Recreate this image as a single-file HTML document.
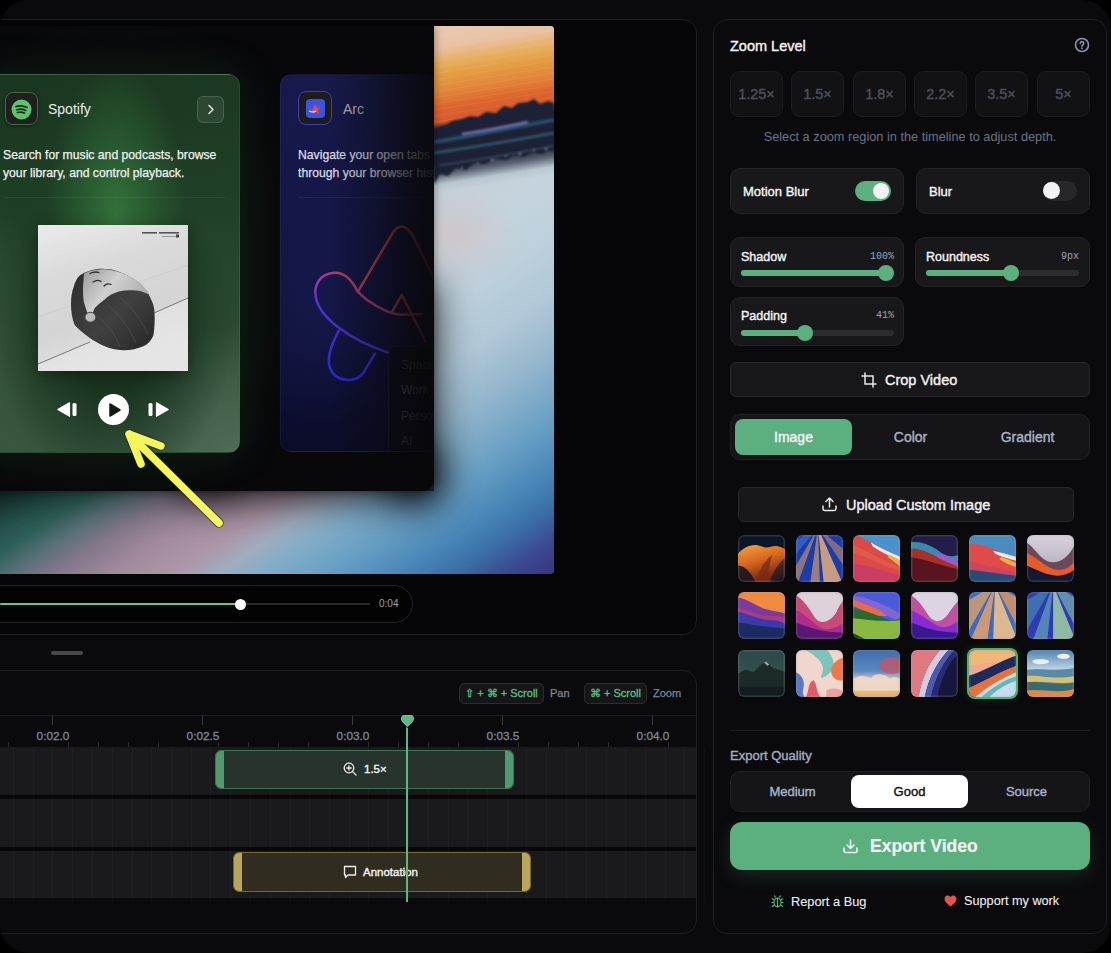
<!DOCTYPE html>
<html><head><meta charset="utf-8">
<style>
*{box-sizing:border-box;margin:0;padding:0}
html,body{width:1111px;height:953px;overflow:hidden;background:#000;font-family:"Liberation Sans",sans-serif}
.a{position:absolute}
#frame{position:absolute;left:0;top:0;width:1111px;height:953px;border-radius:28px;background:#0a0a0c;overflow:hidden}
.panel{position:absolute;border:1px solid #1e1e21;border-radius:14px}
.card{position:absolute;background:#18181a;border:1px solid #232326;border-radius:10px}
.lbl{position:absolute;color:#f2f2f4;font-size:13px;font-weight:normal;-webkit-text-stroke-width:0.4px;white-space:nowrap}
.zb{position:absolute;top:71px;width:53px;height:46px;border-radius:9px;background:#121214;border:1px solid #1c1c1f;color:#4d5058;font-size:14.5px;-webkit-text-stroke-width:.4px;text-align:center;line-height:44px}
.val{position:absolute;font-family:"Liberation Mono",monospace;font-size:10px;color:#9aa3b5;text-align:right}
.trk{position:absolute;height:6px;border-radius:3px;background:#2c2c2f}
.fill{position:absolute;left:0;top:0;height:6px;border-radius:3px;background:#5caf7f}
.knob{position:absolute;width:16px;height:16px;border-radius:50%;background:#5caf7f}
.th{position:absolute;width:47px;height:47px;border-radius:6px;overflow:hidden}
</style></head><body>
<div id="frame">
  <!-- video panel -->
  <div class="panel" id="vp" style="left:-20px;top:19px;width:717px;height:616px;background:#050507"></div>
  <!-- timeline panel -->
  <div class="panel" id="tp" style="left:-20px;top:670px;width:717px;height:264px;background:#0a0a0c"></div>
  <!-- right panel -->
  <div class="panel" id="rp" style="left:713px;top:19px;width:394px;height:915px;background:#0a0a0c"></div>

  <!-- RIGHT PANEL CONTENT -->
  <div class="lbl" style="left:730px;top:38px;font-size:14.5px">Zoom Level</div>
  <svg class="a" style="left:1074px;top:37px" width="16" height="16" viewBox="0 0 16 16"><circle cx="8" cy="8" r="6.5" fill="none" stroke="#8b95a8" stroke-width="1.6"/><path d="M6.2 6.4a1.8 1.8 0 1 1 2.6 1.6c-.6.3-.8.6-.8 1.2" fill="none" stroke="#8b95a8" stroke-width="1.6" stroke-linecap="round"/><circle cx="8" cy="11.3" r=".95" fill="#8b95a8"/></svg>
  <div class="zb" style="left:730px">1.25×</div>
  <div class="zb" style="left:791px">1.5×</div>
  <div class="zb" style="left:853px">1.8×</div>
  <div class="zb" style="left:914px">2.2×</div>
  <div class="zb" style="left:975px">3.5×</div>
  <div class="zb" style="left:1037px">5×</div>
  <div class="a" style="left:730px;width:360px;top:129px;text-align:center;color:#6b7385;font-size:12.75px">Select a zoom region in the timeline to adjust depth.</div>

  <div class="card" style="left:730px;top:168px;width:174px;height:46px"></div>
  <div class="lbl" style="left:743px;top:184px">Motion Blur</div>
  <div class="a" style="left:855px;top:181px;width:36px;height:20px;border-radius:10px;background:#5caf7f"></div>
  <div class="a" style="left:873px;top:183px;width:16px;height:16px;border-radius:50%;background:#f2f2f5"></div>

  <div class="card" style="left:916px;top:168px;width:174px;height:46px"></div>
  <div class="lbl" style="left:929px;top:184px">Blur</div>
  <div class="a" style="left:1043px;top:181px;width:34px;height:20px;border-radius:10px;background:#27272b"></div>
  <div class="a" style="left:1043px;top:182px;width:17px;height:17px;border-radius:50%;background:#f2f2f5"></div>

  <div class="card" style="left:730px;top:237px;width:174px;height:50px"></div>
  <div class="lbl" style="left:741px;top:250px;font-size:12.5px">Shadow</div>
  <div class="val" style="left:840px;width:54px;top:251px">100%</div>
  <div class="trk" style="left:741px;top:270px;width:153px"><div class="fill" style="width:146px"></div></div>
  <div class="knob" style="left:878px;top:265px"></div>

  <div class="card" style="left:915px;top:237px;width:175px;height:50px"></div>
  <div class="lbl" style="left:926px;top:250px;font-size:12.5px">Roundness</div>
  <div class="val" style="left:1025px;width:54px;top:251px">9px</div>
  <div class="trk" style="left:926px;top:270px;width:153px"><div class="fill" style="width:85px"></div></div>
  <div class="knob" style="left:1003px;top:265px"></div>

  <div class="card" style="left:730px;top:297px;width:174px;height:49px"></div>
  <div class="lbl" style="left:741px;top:309px;font-size:12.5px">Padding</div>
  <div class="val" style="left:840px;width:54px;top:310px">41%</div>
  <div class="trk" style="left:741px;top:330px;width:153px"><div class="fill" style="width:64px"></div></div>
  <div class="knob" style="left:797px;top:325px"></div>

  <div class="card" style="left:730px;top:362px;width:360px;height:35px;border-radius:6px;border-color:#28282b"></div>
  <svg class="a" style="left:861px;top:372px" width="16" height="16" viewBox="0 0 16 16" fill="none" stroke="#e8e8ea" stroke-width="1.5" stroke-linecap="round"><path d="M4 1v11h11"/><path d="M1 4h11v11"/></svg>
  <div class="lbl" style="left:885px;top:372px;font-size:14.5px">Crop Video</div>

  <div class="card" style="left:730px;top:414px;width:360px;height:46px;background:#151517;border-color:#202023"></div>
  <div class="a" style="left:735px;top:419px;width:117px;height:36px;border-radius:8px;background:#5caf7f"></div>
  <div class="lbl" style="left:735px;width:117px;text-align:center;top:429px;font-size:14px">Image</div>
  <div class="lbl" style="left:852px;width:117px;text-align:center;top:429px;font-size:14px;color:#a8b2c8">Color</div>
  <div class="lbl" style="left:969px;width:117px;text-align:center;top:429px;font-size:14px;color:#a8b2c8">Gradient</div>

  <div class="card" style="left:738px;top:487px;width:336px;height:35px;border-radius:6px;border-color:#28282b"></div>
  <svg class="a" style="left:821px;top:496px" width="17" height="17" viewBox="0 0 17 17" fill="none" stroke="#e8e8ea" stroke-width="1.5" stroke-linecap="round" stroke-linejoin="round"><path d="M8.5 11V2M5 5.5l3.5-3.5 3.5 3.5M2 10v2.8a1.7 1.7 0 0 0 1.7 1.7h9.6a1.7 1.7 0 0 0 1.7-1.7V10"/></svg>
  <div class="lbl" style="left:846px;top:497px;font-size:14.5px">Upload Custom Image</div>

  <div class="th" style="left:738px;top:534.5px;"><svg width="47" height="47" viewBox="0 0 47 47" style="display:block;filter:blur(.6px);transform:scale(1.04)"><defs><linearGradient id="t1" x1="0" y1="0" x2=".4" y2="1"><stop offset="0" stop-color="#f4a640"/><stop offset=".5" stop-color="#d8661e"/><stop offset="1" stop-color="#6a2012"/></linearGradient></defs><rect width="47" height="47" fill="#0c1626"/><path d="M0 20 C6 12 16 8 24 12 C30 15 34 10 40 12 C44 13 46 14 47 16 L47 40 C40 44 30 47 22 47 L0 47Z" fill="url(#t1)"/><path d="M0 30 C8 30 14 38 18 47 L0 47Z" fill="#1a1420" opacity=".9"/><path d="M32 47 C34 36 40 28 47 22 L47 47Z" fill="#0c1626" opacity=".6"/><path d="M18 47 C20 36 26 26 34 20 C30 30 30 40 32 47Z" fill="#7a2a18" opacity=".8"/></svg><div class="a" style="left:0;top:0;right:0;bottom:0;border-radius:6px;box-shadow:inset 0 0 0 1.5px rgba(255,255,255,.14),inset 0 0 3px rgba(0,0,0,.25)"></div></div>
  <div class="th" style="left:795.5px;top:534.5px;"><svg width="47" height="47" viewBox="0 0 47 47" style="display:block;filter:blur(.6px);transform:scale(1.04)"><rect width="47" height="47" fill="#1c3ca8"/><path d="M22 -6 L-81.9 54 L-28.3 54 Z" fill="#3a6ad0" opacity="0.7"/><path d="M22 -6 L-12.6 54 L0.2 54 Z" fill="#e8a060" opacity="0.55"/><path d="M22 -6 L13.6 54 L24.1 54 Z" fill="#f0a868" opacity="0.6"/><path d="M22 -6 L28.3 54 L48.7 54 Z" fill="#f4b478" opacity="0.8"/><path d="M22 -6 L62.5 54 L93.5 54 Z" fill="#e89858" opacity="0.5"/></svg><div class="a" style="left:0;top:0;right:0;bottom:0;border-radius:6px;box-shadow:inset 0 0 0 1.5px rgba(255,255,255,.14),inset 0 0 3px rgba(0,0,0,.25)"></div></div>
  <div class="th" style="left:853px;top:534.5px;"><svg width="47" height="47" viewBox="0 0 47 47" style="display:block;filter:blur(.6px);transform:scale(1.04)"><rect width="47" height="47" fill="#da4a46"/><path d="M4 0 L47 0 L47 22 C38 18 28 14 18 8 C12 5 8 3 4 0Z" fill="#4a92cc"/><path d="M18 8 C28 14 38 18 47 22 L47 26 C38 22 28 18 20 12Z" fill="#e8e8f2"/><path d="M36 20 C40 22 44 24 47 26 L47 32 C42 28 38 24 34 22Z" fill="#f0b040"/><path d="M0 28 C16 30 32 36 47 40 L47 47 L0 47Z" fill="#c83a6a" opacity=".8"/><path d="M0 10 C14 16 30 26 47 32 L47 36 C30 30 14 22 0 18Z" fill="#e86a4a" opacity=".5"/></svg><div class="a" style="left:0;top:0;right:0;bottom:0;border-radius:6px;box-shadow:inset 0 0 0 1.5px rgba(255,255,255,.14),inset 0 0 3px rgba(0,0,0,.25)"></div></div>
  <div class="th" style="left:911px;top:534.5px;"><svg width="47" height="47" viewBox="0 0 47 47" style="display:block;filter:blur(.6px);transform:scale(1.04)"><rect width="47" height="47" fill="#231d48"/><path d="M0 8 C12 6 22 12 30 18 C36 22 42 22 47 20 L47 47 L0 47Z" fill="#3a8ab0"/><path d="M0 14 C12 14 22 20 30 24 C36 26 42 26 47 26 L47 47 L0 47Z" fill="#a8302a"/><path d="M24 18 C32 20 40 22 47 28 L47 32 C40 28 32 26 26 22Z" fill="#9a5ad0"/><path d="M0 22 C14 24 30 30 47 34 L47 47 L0 47Z" fill="#5a1420"/></svg><div class="a" style="left:0;top:0;right:0;bottom:0;border-radius:6px;box-shadow:inset 0 0 0 1.5px rgba(255,255,255,.14),inset 0 0 3px rgba(0,0,0,.25)"></div></div>
  <div class="th" style="left:969px;top:534.5px;"><svg width="47" height="47" viewBox="0 0 47 47" style="display:block;filter:blur(.6px);transform:scale(1.04)"><rect width="47" height="47" fill="#3a78b0"/><path d="M0 0 L47 0 L47 47 L0 47Z" fill="#4a8cc0"/><path d="M0 10 C12 8 22 14 32 18 C38 20 42 22 47 22 L47 47 L0 47Z" fill="#e04a48"/><path d="M24 16 C32 18 40 20 47 22 L47 26 C40 24 32 22 26 19Z" fill="#e8e8f0"/><path d="M32 22 C38 24 42 26 47 28 L47 32 C40 30 36 28 30 24Z" fill="#f0b040"/><path d="M0 26 C14 30 30 34 47 36 L47 47 L0 47Z" fill="#c8406a" opacity=".7"/><path d="M0 34 C14 36 30 38 47 40 L47 47 L0 47Z" fill="#2a4a7a"/></svg><div class="a" style="left:0;top:0;right:0;bottom:0;border-radius:6px;box-shadow:inset 0 0 0 1.5px rgba(255,255,255,.14),inset 0 0 3px rgba(0,0,0,.25)"></div></div>
  <div class="th" style="left:1026.5px;top:534.5px;"><svg width="47" height="47" viewBox="0 0 47 47" style="display:block;filter:blur(.6px);transform:scale(1.04)"><defs><linearGradient id="t6" x1="0" y1="0" x2="0" y2="1"><stop offset="0" stop-color="#d8d4dc"/><stop offset="1" stop-color="#a8a0b0"/></linearGradient></defs><rect width="47" height="47" fill="url(#t6)"/><path d="M0 8 C6 10 10 20 20 26 C30 30 40 24 47 10 L47 47 L0 47Z" fill="#6a4a5a"/><path d="M0 18 C10 22 18 32 28 34 C38 36 44 30 47 26 L47 47 L0 47Z" fill="#e85a2a"/><path d="M0 30 C10 34 20 40 30 40 C38 40 44 36 47 34 L47 47 L0 47Z" fill="#141830"/></svg><div class="a" style="left:0;top:0;right:0;bottom:0;border-radius:6px;box-shadow:inset 0 0 0 1.5px rgba(255,255,255,.14),inset 0 0 3px rgba(0,0,0,.25)"></div></div>
  <div class="th" style="left:738px;top:592px;"><svg width="47" height="47" viewBox="0 0 47 47" style="display:block;filter:blur(.6px);transform:scale(1.04)"><rect width="47" height="47" fill="#f08a40"/><path d="M0 6 C12 8 20 16 30 18 C38 20 42 20 47 22 L47 47 L0 47Z" fill="#7a3aa0"/><path d="M0 16 C12 18 22 24 32 24 C38 24 42 24 47 26 L47 47 L0 47Z" fill="#c83a70" opacity=".6"/><path d="M0 20 C12 22 22 28 32 28 C40 28 44 30 47 32 L47 47 L0 47Z" fill="#3a3aa8"/><path d="M0 30 C12 32 24 34 47 36 L47 47 L0 47Z" fill="#1e2a62"/></svg><div class="a" style="left:0;top:0;right:0;bottom:0;border-radius:6px;box-shadow:inset 0 0 0 1.5px rgba(255,255,255,.14),inset 0 0 3px rgba(0,0,0,.25)"></div></div>
  <div class="th" style="left:795.5px;top:592px;"><svg width="47" height="47" viewBox="0 0 47 47" style="display:block;filter:blur(.6px);transform:scale(1.04)"><rect width="47" height="47" fill="#ddd2da"/><path d="M0 4 C6 6 12 14 18 24 C24 34 34 30 40 20 C42 14 46 10 47 8 L47 47 L0 47Z" fill="#c84a7a"/><path d="M0 18 C10 22 18 32 26 36 C34 38 42 34 47 30 L47 47 L0 47Z" fill="#b02a90"/><path d="M0 30 C12 34 24 40 47 40 L47 47 L0 47Z" fill="#5a1870"/></svg><div class="a" style="left:0;top:0;right:0;bottom:0;border-radius:6px;box-shadow:inset 0 0 0 1.5px rgba(255,255,255,.14),inset 0 0 3px rgba(0,0,0,.25)"></div></div>
  <div class="th" style="left:853px;top:592px;"><svg width="47" height="47" viewBox="0 0 47 47" style="display:block;filter:blur(.6px);transform:scale(1.04)"><rect width="47" height="47" fill="#4a5ad8"/><path d="M0 4 C14 6 30 12 47 22 L47 30 C30 22 14 14 0 12Z" fill="#9a6ad0" opacity=".7"/><path d="M0 8 C12 12 24 16 34 24 L20 24 C12 20 6 16 0 14Z" fill="#e86a4a"/><path d="M0 16 C12 18 26 24 36 28 C42 30 46 26 47 22 L47 47 L0 47Z" fill="#2a6a30"/><path d="M0 26 C14 28 30 30 47 28 L47 47 L0 47Z" fill="#8ab840"/><path d="M0 40 L0 47 L14 47 C8 44 4 42 0 40Z" fill="#1a3a1a"/></svg><div class="a" style="left:0;top:0;right:0;bottom:0;border-radius:6px;box-shadow:inset 0 0 0 1.5px rgba(255,255,255,.14),inset 0 0 3px rgba(0,0,0,.25)"></div></div>
  <div class="th" style="left:911px;top:592px;"><svg width="47" height="47" viewBox="0 0 47 47" style="display:block;filter:blur(.6px);transform:scale(1.04)"><rect width="47" height="47" fill="#dcd4e2"/><path d="M0 4 C6 6 12 14 18 24 C24 32 32 30 38 20 C42 14 46 10 47 8 L47 47 L0 47Z" fill="#c050a0"/><path d="M0 18 C10 22 20 30 28 34 C36 36 42 32 47 28 L47 47 L0 47Z" fill="#8a2ad0"/><path d="M0 30 C12 34 24 40 47 40 L47 47 L0 47Z" fill="#3a1890"/></svg><div class="a" style="left:0;top:0;right:0;bottom:0;border-radius:6px;box-shadow:inset 0 0 0 1.5px rgba(255,255,255,.14),inset 0 0 3px rgba(0,0,0,.25)"></div></div>
  <div class="th" style="left:969px;top:592px;"><svg width="47" height="47" viewBox="0 0 47 47" style="display:block;filter:blur(.6px);transform:scale(1.04)"><rect width="47" height="47" fill="#3a6cc0"/><path d="M26 -6 L-77.9 54 L-8.6 54 Z" fill="#f0a860" opacity="0.7"/><path d="M26 -6 L-0.7 54 L17.6 54 Z" fill="#e8a068" opacity="0.85"/><path d="M26 -6 L23.9 54 L50.2 54 Z" fill="#f0c088" opacity="0.9"/><path d="M26 -6 L57.9 54 L129.9 54 Z" fill="#e89858" opacity="0.8"/></svg><div class="a" style="left:0;top:0;right:0;bottom:0;border-radius:6px;box-shadow:inset 0 0 0 1.5px rgba(255,255,255,.14),inset 0 0 3px rgba(0,0,0,.25)"></div></div>
  <div class="th" style="left:1026.5px;top:592px;"><svg width="47" height="47" viewBox="0 0 47 47" style="display:block;filter:blur(.6px);transform:scale(1.04)"><rect width="47" height="47" fill="#2e3cb0"/><path d="M26 -6 L-77.9 54 L-8.6 54 Z" fill="#4a90b8" opacity="0.6"/><path d="M26 -6 L4.2 54 L19.7 54 Z" fill="#6ab8b8" opacity="0.6"/><path d="M26 -6 L26.0 54 L50.2 54 Z" fill="#a8d8a0" opacity="0.8"/><path d="M26 -6 L57.9 54 L129.9 54 Z" fill="#80c8b0" opacity="0.6"/></svg><div class="a" style="left:0;top:0;right:0;bottom:0;border-radius:6px;box-shadow:inset 0 0 0 1.5px rgba(255,255,255,.14),inset 0 0 3px rgba(0,0,0,.25)"></div></div>
  <div class="th" style="left:738px;top:650px;"><svg width="47" height="47" viewBox="0 0 47 47" style="display:block;filter:blur(.6px);transform:scale(1.04)"><defs><linearGradient id="t13" x1="0" y1="0" x2="0" y2="1"><stop offset="0" stop-color="#2c4848"/><stop offset="1" stop-color="#3a5a58"/></linearGradient></defs><rect width="47" height="47" fill="url(#t13)"/><path d="M0 24 L8 20 L16 22 L22 16 L28 12 L34 18 L40 20 L47 22 L47 47 L0 47Z" fill="#1c2a2a"/><path d="M26 13 L28 12 L31 15 L29 16Z" fill="#9aa8a8"/><path d="M0 36 L47 36 L47 47 L0 47Z" fill="#141e20"/></svg><div class="a" style="left:0;top:0;right:0;bottom:0;border-radius:6px;box-shadow:inset 0 0 0 1.5px rgba(255,255,255,.14),inset 0 0 3px rgba(0,0,0,.25)"></div></div>
  <div class="th" style="left:795.5px;top:650px;"><svg width="47" height="47" viewBox="0 0 47 47" style="display:block;filter:blur(.6px);transform:scale(1.04)"><rect width="47" height="47" fill="#f0d6cc"/><path d="M8 0 C20 6 30 14 26 24 C22 30 30 28 36 20 C40 14 34 4 30 0Z" fill="#7cc4bc"/><path d="M47 8 C38 10 32 18 36 26 C40 32 47 30 47 30Z" fill="#f07848"/><path d="M0 22 C6 24 10 30 8 38 C6 44 10 47 10 47 L0 47Z" fill="#5a78c8"/><path d="M10 47 C14 40 12 32 18 30 C22 36 20 44 26 47Z" fill="#e05a6a"/><path d="M30 40 C36 36 44 38 47 42 L47 47 L30 47Z" fill="#f0a0a0"/></svg><div class="a" style="left:0;top:0;right:0;bottom:0;border-radius:6px;box-shadow:inset 0 0 0 1.5px rgba(255,255,255,.14),inset 0 0 3px rgba(0,0,0,.25)"></div></div>
  <div class="th" style="left:853px;top:650px;"><svg width="47" height="47" viewBox="0 0 47 47" style="display:block;filter:blur(.6px);transform:scale(1.04)"><defs><linearGradient id="t15" x1="0" y1="0" x2="0" y2="1"><stop offset="0" stop-color="#3e6ca8"/><stop offset=".45" stop-color="#5a88c0"/><stop offset=".65" stop-color="#e8d0c0"/><stop offset="1" stop-color="#e8b050"/></linearGradient></defs><rect width="47" height="47" fill="url(#t15)"/><ellipse cx="38" cy="16" rx="12" ry="8" fill="#c05868" opacity=".8"/><path d="M0 30 C6 24 14 26 18 28 C22 22 32 24 36 28 C40 26 46 28 47 30 L47 40 L0 40Z" fill="#f0d8c8" opacity=".9"/></svg><div class="a" style="left:0;top:0;right:0;bottom:0;border-radius:6px;box-shadow:inset 0 0 0 1.5px rgba(255,255,255,.14),inset 0 0 3px rgba(0,0,0,.25)"></div></div>
  <div class="th" style="left:911px;top:650px;"><svg width="47" height="47" viewBox="0 0 47 47" style="display:block;filter:blur(.6px);transform:scale(1.04)"><rect width="47" height="47" fill="#16163e"/><path d="M0 0 L30 0 C20 10 12 24 8 47 L0 47Z" fill="#e07a80"/><path d="M30 0 L38 0 C28 10 18 26 14 47 L8 47 C12 24 20 10 30 0Z" fill="#d8c8e0"/><path d="M38 0 L44 0 C32 12 24 28 20 47 L14 47 C18 26 28 10 38 0Z" fill="#4a5ab0"/><path d="M44 0 L47 0 L47 4 C36 14 30 28 26 47 L20 47 C24 28 32 12 44 0Z" fill="#2a2a70"/></svg><div class="a" style="left:0;top:0;right:0;bottom:0;border-radius:6px;box-shadow:inset 0 0 0 1.5px rgba(255,255,255,.14),inset 0 0 3px rgba(0,0,0,.25)"></div></div>
  <div class="th" style="left:969px;top:650px;box-shadow:0 0 0 2px #4fae74,0 0 10px rgba(79,174,116,.35);"><svg width="47" height="47" viewBox="0 0 47 47" style="display:block;filter:blur(.6px);transform:scale(1.04)"><rect width="47" height="47" fill="#f0a890"/><path d="M0 0 L47 0 L47 10 C30 12 14 14 0 16Z" fill="#f0b878"/><path d="M0 26 C14 22 30 12 47 6 L47 16 C30 22 14 32 0 38Z" fill="#1e2a5a"/><path d="M0 38 C14 32 30 22 47 16 L47 22 C32 28 16 38 6 47 L0 47Z" fill="#e8703a"/><path d="M6 47 C16 38 32 28 47 22 L47 47Z" fill="#c8dcf0"/><path d="M12 47 C22 38 34 30 47 26 L47 30 C36 34 26 40 20 47Z" fill="#4ab0a0" opacity=".8"/></svg><div class="a" style="left:0;top:0;right:0;bottom:0;border-radius:6px;box-shadow:inset 0 0 0 1.5px rgba(255,255,255,.14),inset 0 0 3px rgba(0,0,0,.25)"></div></div>
  <div class="th" style="left:1026.5px;top:650px;"><svg width="47" height="47" viewBox="0 0 47 47" style="display:block;filter:blur(.6px);transform:scale(1.04)"><defs><linearGradient id="t18" x1="0" y1="0" x2="0" y2="1"><stop offset="0" stop-color="#4a80b0"/><stop offset=".4" stop-color="#b8d0e0"/><stop offset="1" stop-color="#88aac8"/></linearGradient></defs><rect width="47" height="47" fill="url(#t18)"/><ellipse cx="36" cy="7" rx="6" ry="2.5" fill="#f0f0f0"/><ellipse cx="14" cy="12" rx="8" ry="2.5" fill="#e8eef4"/><path d="M0 20 C12 18 30 22 47 18 L47 47 L0 47Z" fill="#5a8aa8"/><path d="M0 26 C12 24 24 30 47 26 L47 32 C30 34 14 30 0 32Z" fill="#d8c070"/><path d="M0 32 C16 30 30 36 47 32 L47 40 C30 42 14 38 0 40Z" fill="#3a6a70"/><path d="M0 40 C16 38 30 44 47 38 L47 47 L0 47Z" fill="#e08a40"/></svg><div class="a" style="left:0;top:0;right:0;bottom:0;border-radius:6px;box-shadow:inset 0 0 0 1.5px rgba(255,255,255,.14),inset 0 0 3px rgba(0,0,0,.25)"></div></div>
  <div class="a" style="left:730px;top:730px;width:360px;height:1px;background:#1c1c1f"></div>
  <div class="lbl" style="left:730px;top:748px;color:#a3acbf">Export Quality</div>
  <div class="card" style="left:730px;top:771px;width:360px;height:41px;background:#151517;border-color:#202023"></div>
  <div class="a" style="left:851px;top:775px;width:117px;height:33px;border-radius:8px;background:#fff"></div>
  <div class="lbl" style="left:734px;width:117px;text-align:center;top:784px;color:#a8b2c8">Medium</div>
  <div class="lbl" style="left:851px;width:117px;text-align:center;top:784px;color:#111">Good</div>
  <div class="lbl" style="left:968px;width:117px;text-align:center;top:784px;color:#a8b2c8">Source</div>

  <div class="a" style="left:730px;top:822px;width:360px;height:48px;border-radius:12px;background:#5caf7f;box-shadow:0 6px 18px rgba(92,175,127,.18)"></div>
  <svg class="a" style="left:842px;top:838px" width="17" height="17" viewBox="0 0 17 17" fill="none" stroke="#f4f4f4" stroke-width="1.6" stroke-linecap="round" stroke-linejoin="round"><path d="M8.5 2v8.5M5 7l3.5 3.5L12 7M2 10v2.8a1.7 1.7 0 0 0 1.7 1.7h9.6a1.7 1.7 0 0 0 1.7-1.7V10"/></svg>
  <div class="lbl" style="left:870px;top:836px;font-size:17.5px;font-weight:bold;-webkit-text-stroke-width:0.2px">Export Video</div>

  <svg class="a" style="left:771px;top:894px" width="13" height="14" viewBox="0 0 13 14" fill="none" stroke="#5caf7f" stroke-width="1.2"><ellipse cx="6.5" cy="8.5" rx="3.5" ry="4.3"/><path d="M6.5 4.5v8.5M3 8.5H0.5M12.5 8.5H10M3.2 6L1 4.5M9.8 6L12 4.5M3.2 11L1 12.8M9.8 11l2.2 1.8M4.5 3.5L3.5 1.5M8.5 3.5l1-2"/></svg>
  <div class="lbl" style="left:791px;top:894px;font-size:12.8px;-webkit-text-stroke-width:0.1px;color:#eceef2">Report a Bug</div>
  <svg class="a" style="left:944px;top:895px" width="13" height="12" viewBox="0 0 13 12"><path d="M6.5 11.5C3 9 .5 6.8.5 3.8.5 2 1.9.6 3.6.6c1.2 0 2.3.7 2.9 1.7C7.1 1.3 8.2.6 9.4.6c1.7 0 3.1 1.4 3.1 3.2 0 3-2.5 5.2-6 7.7z" fill="#e5534b"/></svg>
  <div class="lbl" style="left:964px;top:894px;font-size:12.7px;-webkit-text-stroke-width:0.1px;color:#eceef2">Support my work</div>

  <!-- LEFT: VIDEO -->
  
  <div class="a" style="left:400px;top:460px;width:40px;height:40px;background:#2a4a5c"></div>
  <div class="a" style="left:0;top:491px;width:554px;height:83px;z-index:0"></div>
  <div class="a" id="wallb" style="left:0;top:491px;width:554px;height:83px;border-radius:0 0 4px 0;overflow:hidden;
    background:linear-gradient(146deg,#15302e 0px,#24504a 30px,#2e6058 52px,#5a7078 75px,#84788a 100px,#a08a9c 130px,#ac96a8 165px,#a0acbe 190px,#84aec8 212px,#6aa0c4 248px,#4a88b8 290px,#3a70a8 320px,#3a4a90 350px,#3a3480 378px)"></div>
  <div class="a" id="wall" style="left:434px;top:26px;width:120px;height:548px;border-radius:0 4px 4px 0;overflow:hidden;
    background:linear-gradient(146deg,#c8c0c0 0px,#c6d0d8 150px,#c4d4de 200px,#bccfdb 245px,#b0c8d8 290px,#94b6cc 338px,#6aa0c4 391px,#4a88b8 433px,#3a70a8 463px,#3a4a90 493px,#3a3480 521px)">
    <div class="a" style="left:-54px;top:0;width:174px;height:174px;
    background:linear-gradient(171deg,#ebcdb6 0px,#e8c2a4 30px,#e6ac5a 48px,#e39c40 60px,#e1843a 76px,#dc662e 90px,#d65a2e 104px,#1e2236 112px,#1e2236 145px,#5a6472 156px,rgba(178,194,204,.7) 166px,rgba(196,212,222,0) 174px)"></div>
    <div class="a" style="left:0;top:150px;width:120px;height:120px;background:radial-gradient(ellipse 70px 50px at 20px 60px,rgba(215,185,180,.45),rgba(215,185,180,0))"></div>
    <div class="a" style="left:0;top:0;width:120px;height:110px;background:repeating-linear-gradient(171deg,rgba(255,255,255,0) 0px,rgba(255,255,255,0) 4px,rgba(255,230,200,.07) 5px,rgba(255,255,255,0) 6px)"></div>
    <div class="a" style="left:0;top:0;width:120px;height:174px;filter:blur(.8px)"><svg class="a" style="left:0;top:0" width="120" height="174" viewBox="434 26 120 174">
      <path d="M434 128 L446 125 L452 121 L462 119 L470 116 L478 117 L486 112 L496 113 L504 106 L512 108 L518 103 L528 102 L534 99 L540 104 L548 101 L554 103 L554 152 L548 150 L542 154 L532 152 L524 157 L514 155 L506 160 L494 158 L486 164 L474 163 L466 170 L456 168 L448 176 L440 174 L434 184 Z" fill="#1d2135"/>
      <path d="M434 142 C470 136 510 128 554 120" stroke="#2a5a78" stroke-width="3.5" fill="none" opacity=".85"/>
      <path d="M462 134 C488 130 508 126 528 122" stroke="#8a78c8" stroke-width="2.5" fill="none" opacity=".85"/>
      <path d="M434 153 C476 147 516 140 554 133" stroke="#3a7090" stroke-width="2.5" fill="none" opacity=".7"/>
      <path d="M440 165 C480 160 520 152 554 146" stroke="#4a6a80" stroke-width="1.5" fill="none" opacity=".6"/>
      <g fill="#c8d0d8" opacity=".55"><circle cx="478" cy="163" r="1"/><circle cx="492" cy="160" r="1.2"/><circle cx="506" cy="156" r="1"/><circle cx="520" cy="154" r="1.3"/><circle cx="534" cy="150" r="1"/><circle cx="546" cy="149" r="1.2"/><circle cx="462" cy="168" r="1"/></g>
    </svg></div>
  </div>
  
  <div class="a" style="left:390px;top:280px;width:48px;height:222px;border-radius:14px;background:rgba(0,0,0,.7);filter:blur(18px)"></div>
  <div class="a" style="left:180px;top:450px;width:260px;height:50px;border-radius:14px;background:rgba(0,0,0,.75);filter:blur(18px)"></div>
  <div class="a" style="left:-20px;top:440px;width:260px;height:56px;border-radius:14px;background:rgba(0,0,0,.55);filter:blur(18px)"></div>
  <!-- dark window -->
  <div class="a" id="win" style="left:-20px;top:26px;width:454px;height:465px;border-radius:0 0 12px 0;background:#08080a;overflow:hidden;box-shadow:0 0 8px rgba(0,0,0,.45)">
    <div class="a" style="left:0;top:0;width:454px;height:465px;background:radial-gradient(ellipse 200px 260px at 135px 240px,rgba(40,90,45,.22),rgba(40,90,45,0))"></div>
    <!-- spotify card -->
    <div class="a" id="sp" style="left:0;top:48px;width:260px;height:379px;border-radius:0 12px 12px 0;border:1px solid rgba(120,200,130,.14);overflow:hidden;box-shadow:0 0 36px 6px rgba(50,120,60,.13);
      background:
        radial-gradient(ellipse 70px 150px at 135px 140px,rgba(58,132,66,.75),rgba(58,132,66,0) 100%),radial-gradient(ellipse 120px 160px at 133px 255px,rgba(25,52,31,1) 38%,rgba(25,52,31,0) 100%),radial-gradient(ellipse 150px 130px at 260px 379px,rgba(80,108,86,.95),rgba(80,108,86,0) 100%),radial-gradient(ellipse 70px 200px at 0px 310px,rgba(58,92,64,.75),rgba(58,92,64,0) 100%),linear-gradient(170deg,#1a3620 0%,#1e3f25 35%,#2a4a31 70%,#3e5a44 100%)">
    </div>
    <div class="a" style="left:25px;top:66px;width:33px;height:33px;border-radius:8px;background:#1f1f1f;border:1.5px solid #3f6b47;box-shadow:0 1px 4px rgba(0,0,0,.4)"></div>
    <svg class="a" style="left:31px;top:73px" width="21" height="21" viewBox="0 0 21 21"><circle cx="10.5" cy="10.5" r="10" fill="#5ac46f"/><path d="M5 7.6c3.7-1.1 8-.8 11 .9M5.7 10.7c3-.9 6.5-.6 9 .8M6.3 13.6c2.5-.7 5.2-.5 7.3.6" fill="none" stroke="#1c2a1e" stroke-width="1.6" stroke-linecap="round"/></svg>
    <div class="a" style="left:68px;top:75px;color:#e9ede9;font-size:14px">Spotify</div>
    <div class="a" style="left:217px;top:70px;width:27px;height:27px;border-radius:6px;background:rgba(255,255,255,.07);border:1px solid rgba(255,255,255,.14)"></div>
    <svg class="a" style="left:226px;top:78px" width="10" height="11" viewBox="0 0 10 11"><path d="M3 1.5l4 4-4 4" fill="none" stroke="#e8e8e8" stroke-width="1.5" stroke-linecap="round" stroke-linejoin="round"/></svg>
    <div class="a" style="left:23px;top:120px;color:#eef1ee;font-size:12.2px;line-height:18px;white-space:nowrap;-webkit-text-stroke-width:0.25px">Search for music and podcasts, browse<br>your library, and control playback.</div>
    <div class="a" style="left:23px;top:171px;width:222px;height:1px;background:rgba(255,255,255,.06)"></div>
    <!-- album -->
    <svg class="a" style="left:58px;top:199px;box-shadow:0 4px 14px rgba(0,0,0,.35)" width="150" height="146" viewBox="0 0 150 146">
      <defs><linearGradient id="alb" x1="0" y1="0" x2="0.3" y2="1"><stop offset="0" stop-color="#ebebeb"/><stop offset=".35" stop-color="#dadada"/><stop offset=".7" stop-color="#d4d4d4"/><stop offset="1" stop-color="#e2e2e2"/></linearGradient>
      <linearGradient id="face" x1="0" y1="0" x2="1" y2=".6"><stop offset="0" stop-color="#9a9a9a"/><stop offset=".45" stop-color="#d0d0d0"/><stop offset="1" stop-color="#a8a8a8"/></linearGradient>
      <linearGradient id="hair" x1="0" y1="0" x2="1" y2="1"><stop offset="0" stop-color="#2c2c2c"/><stop offset=".55" stop-color="#404040"/><stop offset="1" stop-color="#262626"/></linearGradient></defs>
      <rect width="150" height="146" fill="url(#alb)"/>
      <path d="M0 92 L150 40" stroke="#cdcdcd" stroke-width=".8"/>
      <path d="M0 146 L0 139 L52 117 L116 88 L150 73 L150 146Z" fill="#e8e8e8" opacity=".55"/>
      <path d="M0 139 L52 117 M116 88 L150 73" stroke="#6a6a6a" stroke-width=".9"/>
      <path d="M41.4 50.7 C50 45 60 43 67 44 L73.4 44.4 C80 46 85 48 89.2 50.2 C96 54 101 57 103.9 60.2 C108 65 111 69 112.3 72.8 C115 78 116.5 83 116.5 87.5 C117 96 116.5 104 115.4 110.6 C113 116 110 119 106 121 C99 124 92 125.5 85 125.3 C78 125 72 123.5 66.1 121 C60 118 55 115.5 51.4 112.7 C45 108 40 104 36.7 100.1 C34 94 33 86 33 79.1 C33 72 34 66 35.6 62.3 C37 57 39 53 41.4 50.7Z" fill="url(#hair)"/>
      <path d="M46.1 48.6 C53 45 61 44 68.2 44.4 C76 45 83 47 89.2 50.2 C95 53 100 56 103.9 60.2 C107 63 110 66 111.2 69.6 C106 67 102 65.5 97.6 65.4 C91 65 86 65.5 80.8 66.5 C75 68 70 71 66.1 74.9 C62 78 59 80 56.6 83.3 C55 87 54 90 53.5 93.8 C51 91 49 88 48.2 84.3 C46 79 45 74 45.1 68.6 C45 63 45 59 45.6 56 C45.6 52 45.8 50 46.1 48.6Z" fill="url(#face)"/>
      <path d="M52 48.5 C55 47 58 46.5 61 47.5 M55 57 C58 55 61 55 63 56.5 M66 61 C68 59 71 58.5 73 59.5" stroke="#2e2e2e" stroke-width="1.3" fill="none" stroke-linecap="round"/>
      <ellipse cx="52.4" cy="92.2" rx="5.5" ry="5" fill="#bdbdbd" stroke="#4a4a4a" stroke-width="1.1"/>
      <path d="M70 80 C82 90 92 104 98 118 M82 72 C94 82 104 96 110 110 M60 92 C70 100 78 110 82 122" stroke="#5e5e5e" stroke-width=".8" fill="none" opacity=".55"/>
      <rect x="104" y="7" width="15" height="1.6" fill="#555"/><rect x="121" y="7" width="20" height="1.6" fill="#555"/><rect x="124" y="11" width="16" height="1" fill="#999"/><rect x="138" y="9.5" width="3" height="3" fill="#444"/>
    </svg>
    <!-- controls -->
    <svg class="a" style="left:77px;top:376px" width="22" height="15" viewBox="0 0 22 15"><path d="M0.8 7.5L12.5 0.8v13.4z" fill="#fff" stroke="#fff" stroke-width="1.2" stroke-linejoin="round"/><rect x="15.5" y="1" width="4" height="13" rx="1.5" fill="#fff"/></svg>
    <div class="a" style="left:118px;top:368px;width:31px;height:31px;border-radius:50%;background:#fff"></div>
    <svg class="a" style="left:128px;top:376px" width="14" height="16" viewBox="0 0 14 16"><path d="M2 2L12 8 2 14z" fill="#101a12" stroke="#101a12" stroke-width="1.5" stroke-linejoin="round"/></svg>
    <svg class="a" style="left:167px;top:376px" width="22" height="15" viewBox="0 0 22 15"><rect x="1.5" y="1" width="4" height="13" rx="1.5" fill="#fff"/><path d="M21.2 7.5L9.5 0.8v13.4z" fill="#fff" stroke="#fff" stroke-width="1.2" stroke-linejoin="round"/></svg>

    <!-- arc card -->
    <div class="a" id="arc" style="left:300px;top:48px;width:220px;height:378px;border-radius:12px;border:1px solid rgba(140,150,255,.08);overflow:hidden;
      background:radial-gradient(ellipse 90px 120px at 40px 230px,rgba(28,32,96,.35),rgba(28,32,96,0)),linear-gradient(180deg,#171a4a 0%,#141746 35%,#10123a 70%,#0b0c28 100%)">
      <div class="a" style="left:107px;top:271px;width:120px;height:120px;border-radius:8px;background:rgba(12,12,22,.75);border:1px solid rgba(255,255,255,.07)">
        <div class="a" style="left:12px;top:11px;color:#45455a;font-size:12px">Spaces</div>
        <div class="a" style="left:12px;top:36px;color:#70707c;font-size:12px">Work</div>
        <div class="a" style="left:12px;top:62px;color:#5c5c68;font-size:12px">Personal</div>
        <div class="a" style="left:12px;top:87px;color:#5c5c68;font-size:12px">AI</div>
      </div>
    </div>
    <svg class="a" style="left:0;top:0" width="454" height="465" viewBox="-20 26 454 465">
      <defs><linearGradient id="ag" gradientUnits="userSpaceOnUse" x1="420" y1="235" x2="330" y2="365"><stop offset="0" stop-color="#b8403a"/><stop offset=".45" stop-color="#c0404a"/><stop offset=".6" stop-color="#9a3aa8"/><stop offset=".75" stop-color="#4a30d0"/><stop offset="1" stop-color="#2a2ad0"/></linearGradient></defs>
      <g fill="none" stroke="url(#ag)" stroke-width="2.5" stroke-linecap="round" stroke-linejoin="round">
        <path d="M357.8 291.8 L392 234 Q401.7 218 413 236 L445 300"/>
        <path d="M357.8 291.8 C352 280 345 272 334 272.8 C320 274 313 285 316 298 C320 318 350 340 388 352.6"/>
        <path d="M357.8 291.8 C368 302 385 313 400 314.7 L422 314"/>
        <path d="M391.7 312.7 L401.7 294.8 L425.6 341.6"/>
        <path d="M338.9 330.7 C333 342 326 356 330 368 C335 382 356 384 364 372 L374.8 353.6"/>
      </g>
    </svg>
    <div class="a" style="left:318px;top:65px;width:34px;height:34px;border-radius:8px;background:#1b1b20;border:1.5px solid #3b3fb0"></div>
    <div class="a" style="left:326px;top:73px;width:19px;height:19px;border-radius:4px;background:#3e52dc"></div>
    <svg class="a" style="left:327px;top:74px" width="17" height="17" viewBox="0 0 17 17"><path d="M3 10l3-1 2-5 2 4 4-1-3 3 1 4-3-2-3 2 1-3z" fill="#e24a4a"/><path d="M2 11c2 1 4 2 7 0" stroke="#fff" stroke-width="1.2" fill="none"/></svg>
    <div class="a" style="left:363px;top:75px;color:#b7b8c4;font-size:14px">Arc</div>
    <div class="a" style="left:318px;top:120px;color:#dcdde6;font-size:12.2px;line-height:18px;white-space:nowrap;-webkit-text-stroke-width:0.25px">Navigate your open tabs and<br>through your browser history</div>
    <div class="a" style="left:318px;top:171px;width:200px;height:1px;background:rgba(255,255,255,.06)"></div>
    <!-- right fade -->
    <div class="a" style="left:350px;top:0;width:104px;height:465px;background:linear-gradient(90deg,rgba(8,8,10,0) 0%,rgba(8,8,10,.35) 40%,rgba(8,8,10,.75) 75%,rgba(8,8,10,.95) 100%)"></div>
  </div>
  <!-- arrow -->
  <svg class="a" style="left:110px;top:420px" width="130" height="120" viewBox="110 420 130 120">
    <g stroke="#1c1c3a" stroke-width="9.5" stroke-linecap="round" stroke-linejoin="round" fill="none" opacity=".6"><path d="M219 523L131 436M129 434L161 446M129 434L141 464"/></g>
    <g stroke="#f4f75a" stroke-width="7.5" stroke-linecap="round" stroke-linejoin="round" fill="none"><path d="M219 523L131 436M129 434L161 446M129 434L141 464"/></g>
  </svg>
  <!-- playback -->
  <div class="a" style="left:-40px;top:585px;width:453px;height:38px;border-radius:19px;background:#030304;border:1px solid #232326"></div>
  <div class="a" style="left:0;top:603px;width:370px;height:2px;border-radius:1px;background:#2a2a2d"></div>
  <div class="a" style="left:0;top:603px;width:240px;height:2px;border-radius:1px;background:#66c48c"></div>
  <div class="a" style="left:235px;top:599px;width:11px;height:11px;border-radius:50%;background:#fff"></div>
  <div class="a" style="left:379px;top:598px;color:#9aa0b0;font-size:10px">0:04</div>
  <!-- TIMELINE -->
  
  <div class="a" style="left:51px;top:651px;width:32px;height:4px;border-radius:2px;background:#48484c"></div>
  <div class="a" style="left:459px;top:683px;width:85px;height:21px;border-radius:5px;background:#161618;border:1px solid #2c2c2f"></div>
  <div class="a" style="left:459px;width:85px;text-align:center;top:687px;color:#5cb882;font-size:11px;-webkit-text-stroke-width:.35px">⇧ + ⌘ + Scroll</div>
  <div class="a" style="left:550px;top:687px;color:#7f889a;font-size:11px;-webkit-text-stroke-width:.25px">Pan</div>
  <div class="a" style="left:584px;top:683px;width:63px;height:21px;border-radius:5px;background:#161618;border:1px solid #2c2c2f"></div>
  <div class="a" style="left:584px;width:63px;text-align:center;top:687px;color:#5cb882;font-size:11px;-webkit-text-stroke-width:.35px">⌘ + Scroll</div>
  <div class="a" style="left:653px;top:687px;color:#7f889a;font-size:11px;-webkit-text-stroke-width:.25px">Zoom</div>
  <div class="a" style="left:0;top:715px;width:696px;height:1px;background:#1c1c1f"></div>
  <div class="a" style="left:52px;top:716px;width:1px;height:9px;background:#3a3a3e"></div><div class="a" style="left:22px;width:62px;text-align:center;top:729px;color:#7f889a;font-size:11.8px;-webkit-text-stroke-width:.3px">0:02.0</div><div class="a" style="left:202px;top:716px;width:1px;height:9px;background:#3a3a3e"></div><div class="a" style="left:172px;width:62px;text-align:center;top:729px;color:#7f889a;font-size:11.8px;-webkit-text-stroke-width:.3px">0:02.5</div><div class="a" style="left:352px;top:716px;width:1px;height:9px;background:#3a3a3e"></div><div class="a" style="left:322px;width:62px;text-align:center;top:729px;color:#7f889a;font-size:11.8px;-webkit-text-stroke-width:.3px">0:03.0</div><div class="a" style="left:502px;top:716px;width:1px;height:9px;background:#3a3a3e"></div><div class="a" style="left:472px;width:62px;text-align:center;top:729px;color:#7f889a;font-size:11.8px;-webkit-text-stroke-width:.3px">0:03.5</div><div class="a" style="left:652px;top:716px;width:1px;height:9px;background:#3a3a3e"></div><div class="a" style="left:622px;width:62px;text-align:center;top:729px;color:#7f889a;font-size:11.8px;-webkit-text-stroke-width:.3px">0:04.0</div><div class="a" style="left:8px;top:742px;width:1px;height:5px;background:#2a2a2d"></div><div class="a" style="left:68px;top:742px;width:1px;height:5px;background:#2a2a2d"></div><div class="a" style="left:98px;top:742px;width:1px;height:5px;background:#2a2a2d"></div><div class="a" style="left:128px;top:742px;width:1px;height:5px;background:#2a2a2d"></div><div class="a" style="left:158px;top:742px;width:1px;height:5px;background:#2a2a2d"></div><div class="a" style="left:218px;top:742px;width:1px;height:5px;background:#2a2a2d"></div><div class="a" style="left:248px;top:742px;width:1px;height:5px;background:#2a2a2d"></div><div class="a" style="left:278px;top:742px;width:1px;height:5px;background:#2a2a2d"></div><div class="a" style="left:308px;top:742px;width:1px;height:5px;background:#2a2a2d"></div><div class="a" style="left:368px;top:742px;width:1px;height:5px;background:#2a2a2d"></div><div class="a" style="left:398px;top:742px;width:1px;height:5px;background:#2a2a2d"></div><div class="a" style="left:428px;top:742px;width:1px;height:5px;background:#2a2a2d"></div><div class="a" style="left:458px;top:742px;width:1px;height:5px;background:#2a2a2d"></div><div class="a" style="left:518px;top:742px;width:1px;height:5px;background:#2a2a2d"></div><div class="a" style="left:548px;top:742px;width:1px;height:5px;background:#2a2a2d"></div><div class="a" style="left:578px;top:742px;width:1px;height:5px;background:#2a2a2d"></div><div class="a" style="left:608px;top:742px;width:1px;height:5px;background:#2a2a2d"></div><div class="a" style="left:668px;top:742px;width:1px;height:5px;background:#2a2a2d"></div>
  <div class="a" style="left:0;top:747px;width:696px;height:151px;background:#1a1a1c"></div>
  <div class="a" style="left:0;top:795px;width:696px;height:4px;background:#070709"></div>
  <div class="a" style="left:0;top:847px;width:696px;height:4px;background:#070709"></div>
  <div class="a" style="left:13px;top:747px;width:1px;height:155px;background:rgba(255,255,255,.025)"></div><div class="a" style="left:33px;top:747px;width:1px;height:155px;background:rgba(255,255,255,.025)"></div><div class="a" style="left:52px;top:747px;width:1px;height:155px;background:rgba(255,255,255,.025)"></div><div class="a" style="left:72px;top:747px;width:1px;height:155px;background:rgba(255,255,255,.025)"></div><div class="a" style="left:92px;top:747px;width:1px;height:155px;background:rgba(255,255,255,.025)"></div><div class="a" style="left:112px;top:747px;width:1px;height:155px;background:rgba(255,255,255,.025)"></div><div class="a" style="left:132px;top:747px;width:1px;height:155px;background:rgba(255,255,255,.025)"></div><div class="a" style="left:151px;top:747px;width:1px;height:155px;background:rgba(255,255,255,.025)"></div><div class="a" style="left:171px;top:747px;width:1px;height:155px;background:rgba(255,255,255,.025)"></div><div class="a" style="left:191px;top:747px;width:1px;height:155px;background:rgba(255,255,255,.025)"></div><div class="a" style="left:210px;top:747px;width:1px;height:155px;background:rgba(255,255,255,.025)"></div><div class="a" style="left:230px;top:747px;width:1px;height:155px;background:rgba(255,255,255,.025)"></div><div class="a" style="left:250px;top:747px;width:1px;height:155px;background:rgba(255,255,255,.025)"></div><div class="a" style="left:270px;top:747px;width:1px;height:155px;background:rgba(255,255,255,.025)"></div><div class="a" style="left:290px;top:747px;width:1px;height:155px;background:rgba(255,255,255,.025)"></div><div class="a" style="left:309px;top:747px;width:1px;height:155px;background:rgba(255,255,255,.025)"></div><div class="a" style="left:329px;top:747px;width:1px;height:155px;background:rgba(255,255,255,.025)"></div><div class="a" style="left:349px;top:747px;width:1px;height:155px;background:rgba(255,255,255,.025)"></div><div class="a" style="left:368px;top:747px;width:1px;height:155px;background:rgba(255,255,255,.025)"></div><div class="a" style="left:388px;top:747px;width:1px;height:155px;background:rgba(255,255,255,.025)"></div><div class="a" style="left:408px;top:747px;width:1px;height:155px;background:rgba(255,255,255,.025)"></div><div class="a" style="left:428px;top:747px;width:1px;height:155px;background:rgba(255,255,255,.025)"></div><div class="a" style="left:448px;top:747px;width:1px;height:155px;background:rgba(255,255,255,.025)"></div><div class="a" style="left:467px;top:747px;width:1px;height:155px;background:rgba(255,255,255,.025)"></div><div class="a" style="left:487px;top:747px;width:1px;height:155px;background:rgba(255,255,255,.025)"></div><div class="a" style="left:507px;top:747px;width:1px;height:155px;background:rgba(255,255,255,.025)"></div><div class="a" style="left:526px;top:747px;width:1px;height:155px;background:rgba(255,255,255,.025)"></div><div class="a" style="left:546px;top:747px;width:1px;height:155px;background:rgba(255,255,255,.025)"></div><div class="a" style="left:566px;top:747px;width:1px;height:155px;background:rgba(255,255,255,.025)"></div><div class="a" style="left:586px;top:747px;width:1px;height:155px;background:rgba(255,255,255,.025)"></div><div class="a" style="left:606px;top:747px;width:1px;height:155px;background:rgba(255,255,255,.025)"></div><div class="a" style="left:625px;top:747px;width:1px;height:155px;background:rgba(255,255,255,.025)"></div><div class="a" style="left:645px;top:747px;width:1px;height:155px;background:rgba(255,255,255,.025)"></div><div class="a" style="left:665px;top:747px;width:1px;height:155px;background:rgba(255,255,255,.025)"></div><div class="a" style="left:684px;top:747px;width:1px;height:155px;background:rgba(255,255,255,.025)"></div><div class="a" style="left:704px;top:747px;width:1px;height:155px;background:rgba(255,255,255,.025)"></div>
  <!-- zoom block -->
  <div class="a" style="left:215px;top:750px;width:299px;height:39px;border-radius:6px;background:#27332d;border:1px solid #3f7454;overflow:hidden">
    <div class="a" style="left:0;top:0;width:8px;height:37px;background:#4f9a6e"></div>
    <div class="a" style="right:0;top:0;width:8px;height:37px;background:#4f9a6e"></div>
  </div>
  <svg class="a" style="left:343px;top:762px" width="14" height="14" viewBox="0 0 14 14" fill="none" stroke="#eee" stroke-width="1.3" stroke-linecap="round"><circle cx="6" cy="6" r="4.8"/><path d="M9.6 9.6L13 13M6 3.8v4.4M3.8 6h4.4"/></svg>
  <div class="a" style="left:364px;top:763px;color:#f0f0f0;font-size:11.5px;-webkit-text-stroke-width:.4px">1.5×</div>
  <!-- annotation block -->
  <div class="a" style="left:233px;top:852px;width:298px;height:40px;border-radius:6px;background:#302c20;border:1px solid #75693a;overflow:hidden">
    <div class="a" style="left:0;top:0;width:8px;height:38px;background:#b9a656"></div>
    <div class="a" style="right:0;top:0;width:8px;height:38px;background:#b9a656"></div>
  </div>
  <svg class="a" style="left:343px;top:865px" width="14" height="14" viewBox="0 0 14 14" fill="none" stroke="#eee" stroke-width="1.3" stroke-linejoin="round"><path d="M1.5 1.5h11v8.5H5L2.5 12.5V10h-1z"/></svg>
  <div class="a" style="left:363px;top:866px;color:#f0f0f0;font-size:11.5px;-webkit-text-stroke-width:.4px">Annotation</div>
  <!-- playhead -->
  <div class="a" style="left:406px;top:722px;width:2px;height:180px;background:#5cb882"></div>
  <svg class="a" style="left:399px;top:713px" width="17" height="16" viewBox="0 0 17 16"><path d="M5 2.5H12C13.8 2.5 14.8 4 14.6 6 14.3 8.4 11.5 11 8.5 13.6 5.5 11 2.7 8.4 2.4 6 2.2 4 3.2 2.5 5 2.5Z" fill="#5fb585" stroke="#000" stroke-opacity=".8" stroke-width="2.4"/><path d="M5 2.5H12C13.8 2.5 14.8 4 14.6 6 14.3 8.4 11.5 11 8.5 13.6 5.5 11 2.7 8.4 2.4 6 2.2 4 3.2 2.5 5 2.5Z" fill="#5fb585" stroke="#86d4a4" stroke-width=".9"/></svg>

</div>
</body></html>
